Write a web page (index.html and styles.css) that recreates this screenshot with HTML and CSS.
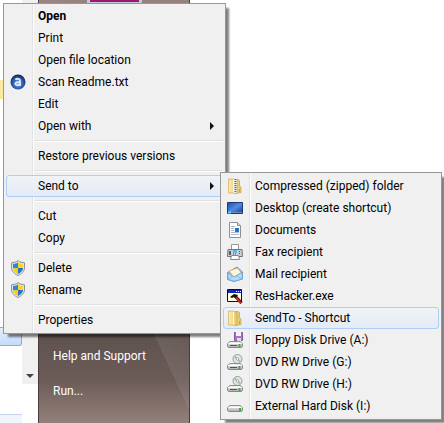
FILE: index.html
```html
<!DOCTYPE html>
<html lang="en">
<head>
<meta charset="utf-8">
<title>Send to menu</title>
<link rel="stylesheet" href="styles.css">
</head>
<body>
<svg class="defs" aria-hidden="true">
  <defs>
    <linearGradient id="gold" x1="0" x2="1"><stop offset="0" stop-color="#fbf0b4"/><stop offset="1" stop-color="#e3c368"/></linearGradient>
    <linearGradient id="metal" x1="0" x2="0" y1="0" y2="1"><stop offset="0" stop-color="#f8f8f8"/><stop offset="1" stop-color="#aaa"/></linearGradient>
    <linearGradient id="screen" x1="0" x2="1" y1="0" y2="1"><stop offset="0" stop-color="#1c4ba8"/><stop offset=".5" stop-color="#4d8ce8"/><stop offset="1" stop-color="#123c98"/></linearGradient>
    <radialGradient id="ball" cx=".5" cy=".6" r=".6"><stop offset="0" stop-color="#6fa0ea"/><stop offset=".6" stop-color="#2c5cb0"/><stop offset="1" stop-color="#0c1c4c"/></radialGradient>
    <symbol id="shield" viewBox="0 0 16 16">
      <path d="M8 .5 10 2l4.500.8v5c0 3.500-3 6.200-6.500 7.700C4.500 14 1.500 11.300 1.500 7.800v-5L6 2z" fill="#e4e4df" stroke="#8d9297"/>
      <path d="M8 2.300V8H3V3.900l3.300-.5z" fill="#2b86dc"/><path d="M8 2.300 9.700 3.400l3.300.5V8H8z" fill="#f8d52c"/>
      <path d="M3 8h5v6C5.500 12.800 3 10.800 3 8z" fill="#f3cb22"/><path d="M8 8h5c0 2.800-2.500 4.800-5 6z" fill="#2573cf"/>
    </symbol>
    <symbol id="folder" viewBox="0 0 16 16">
      <path d="M8 1.500h3.500l1 1V8l1.500 1v5.500L8 15.500z" fill="#e8cb72" stroke="#c9a343" stroke-width=".7"/>
      <path d="M1.500 1h5L10 2.500V15.500L6.500 15h-5z" fill="url(#gold)" stroke="#cfac50" stroke-width=".7"/>
      <path d="M6.500 1.500v13" stroke="#fffbe0"/>
      <path d="M12.500 11v3" stroke="#6db5e0"/>
    </symbol>
    <symbol id="drive" viewBox="0 0 16 16">
      <path d="M3 9.500h10l2.500 2v3l-1 1h-13l-1-1v-3z" fill="url(#metal)" stroke="#777" stroke-width=".8"/>
      <path d="M1 11.500h14" stroke="#fff"/><path d="M3 13.500h7" stroke="#555"/><path d="M11.500 12h2v3h-2z" fill="#38b530"/>
    </symbol>
    <symbol id="disc-drive" viewBox="0 0 16 16">
      <circle cx="10.500" cy="5" r="4.500" fill="#e3e8e6" stroke="#888" stroke-width=".8"/><path d="M10.500 5 7 3.500 8.500 1.500zM10.500 5l3.500 2-2 1.500z" fill="#8fc7a0"/><circle cx="10.500" cy="5" r="1.300" fill="#fff" stroke="#888" stroke-width=".7"/>
      <use href="#drive"/>
    </symbol>
  </defs>
</svg>

<div class="desktop">
  <div class="pane">
    <div class="pane-mark"></div>
    <div class="pane-selected"></div>
    <div class="pane-footer"></div>
  </div>
  <div class="scrollbar"><button class="scroll-down" aria-label="Scroll down"></button></div>
  <nav class="start">
    <div class="avatar"></div>
    <a href="#">Help and Support</a>
    <a href="#">Run...</a>
  </nav>
</div>

<div class="menu context" role="menu">
  <button class="item default" role="menuitem"><span class="icon"></span>Open</button>
  <button class="item" role="menuitem"><span class="icon"></span>Print</button>
  <button class="item" role="menuitem"><span class="icon"></span>Open file location</button>
  <button class="item" role="menuitem"><svg class="icon" viewBox="0 0 16 16"><circle cx="8" cy="8" r="7.500" fill="url(#ball)"/><path d="M5.500 5.800C6.500 4.300 10 4.300 10 6.800V12M10 8C7 8 5.300 8.300 5.300 9.800s3 2.200 4.700.2" fill="none" stroke="#dbe8ff" stroke-width="1.800"/></svg>Scan Readme.txt</button>
  <button class="item" role="menuitem"><span class="icon"></span>Edit</button>
  <button class="item parent" role="menuitem"><span class="icon"></span>Open with</button>
  <hr>
  <button class="item" role="menuitem"><span class="icon"></span>Restore previous versions</button>
  <hr>
  <button class="item parent active" role="menuitem"><span class="icon"></span>Send to</button>
  <hr>
  <button class="item" role="menuitem"><span class="icon"></span>Cut</button>
  <button class="item" role="menuitem"><span class="icon"></span>Copy</button>
  <hr>
  <button class="item" role="menuitem"><svg class="icon"><use href="#shield"/></svg>Delete</button>
  <button class="item" role="menuitem"><svg class="icon"><use href="#shield"/></svg>Rename</button>
  <hr>
  <button class="item" role="menuitem"><span class="icon"></span>Properties</button>
</div>

<div class="menu submenu" role="menu">
  <button class="item" role="menuitem"><svg class="icon" viewBox="0 0 16 16"><use href="#folder"/><path d="M8.500 1v14" stroke="#e8e8e8" stroke-width="3"/><path d="M8.500 1v14" stroke="#5c6478" stroke-width="2" stroke-dasharray="1 1"/></svg>Compressed (zipped) folder</button>
  <button class="item" role="menuitem"><svg class="icon" viewBox="0 0 16 16"><path d="M.5 2.500h15v11H.5z" fill="url(#screen)" stroke="#22386b"/><path d="M1 12.500h14" stroke="#6f88b4"/><path d="M1 12.500h3" stroke="#67d2e8" stroke-width="2"/></svg>Desktop (create shortcut)</button>
  <button class="item" role="menuitem"><svg class="icon" viewBox="0 0 16 16"><path d="M2.500.5h8l3 3v12h-11z" fill="#fff" stroke="#8b9094"/><path d="M10.500.5v3h3" fill="#ddd" stroke="#8b9094"/><path d="M4 4.500h4M4 6.500h3M4 8.500h3M4 10.500h8M4 12.500h8" stroke="#a9bad0"/><path d="M8 6h4v4H8z" fill="#2870c8"/></svg>Documents</button>
  <button class="item" role="menuitem"><svg class="icon" viewBox="0 0 16 16"><path d="M4.500.5h7v6h-7z" fill="#fff" stroke="#999"/><path d="M1 5.500h14l.5 7H.5z" fill="#c9ced3" stroke="#6e7479"/><path d="M2 7h2v4H2z" fill="#555e66"/><path d="M6 6h4v3H6z" fill="#58b7ed"/><path d="M6 10h4M12 7.500h2M12 9.500h2" stroke="#555" stroke-dasharray="1 1"/><path d="M4.500 11.500h7l1 4h-9z" fill="#fff" stroke="#888"/></svg>Fax recipient</button>
  <button class="item" role="menuitem"><svg class="icon" viewBox="0 0 16 16"><path d="M.5 6.500 10 1l5.500 5v7L7 15.500l-6.500-2z" fill="#86bce8" stroke="#5287b9" stroke-width=".8"/><path d="m2 5 8.500-3L14 6.500 7 11z" fill="#fff5dc" stroke="#dfa85b" stroke-width=".7"/><path d="M.8 7 7 11l8.300-4.500V13L7 15.200l-6.200-2z" fill="#b4dbf8" stroke="#5f9dd0" stroke-width=".6"/><path d="m1 13 5-3M15 12.500 9 10" stroke="#77b3e2" stroke-width=".7"/></svg>Mail recipient</button>
  <button class="item" role="menuitem"><svg class="icon" viewBox="0 0 16 16"><path d="M.5 1.500h14v12H.5z" fill="#fffde0" stroke="#111"/><path d="M1 2h13v3H1z" fill="#1725a8"/><path d="M9 3.500h5" stroke="#fff" stroke-dasharray="1 1"/><path d="m3 9 4-3 4 1-2 3-2-1-2 1z" fill="#111"/><path d="m8 8 6.500 7" stroke="#111" stroke-width="3"/><path d="m9 9.500 5 5.500" stroke="#e02020" stroke-width="2"/></svg>ResHacker.exe</button>
  <button class="item active" role="menuitem"><svg class="icon"><use href="#folder"/></svg>SendTo - Shortcut</button>
  <button class="item" role="menuitem"><svg class="icon" viewBox="0 0 16 16"><path d="M7.500.5h8v8h-8z" fill="#a678bd" stroke="#84589c"/><path d="M9 0h5v4H9z" fill="#f6effa"/><path d="M10 6h4v3h-4z" fill="#ddd"/><use href="#drive"/></svg>Floppy Disk Drive (A:)</button>
  <button class="item" role="menuitem"><svg class="icon"><use href="#disc-drive"/></svg>DVD RW Drive (G:)</button>
  <button class="item" role="menuitem"><svg class="icon"><use href="#disc-drive"/></svg>DVD RW Drive (H:)</button>
  <button class="item" role="menuitem"><svg class="icon" viewBox="0 0 16 16"><path d="M3 7.500h10l2.500 2v3l-1 1h-13l-1-1v-3z" fill="url(#metal)" stroke="#777" stroke-width=".8"/><path d="M1 9.500h14" stroke="#fff"/><path d="M12 10h2v3h-2z" fill="#38b530"/></svg>External Hard Disk (I:)</button>
</div>
</body>
</html>
```

FILE: styles.css
```css
* { box-sizing: border-box; }

body {
  margin: 0;
  min-height: 100vh;
  background: #fff;
  font: 12px/20px Roboto, "Noto Sans", sans-serif;
  color: #000;
  overflow: hidden;
}

.defs { position: absolute; width: 0; height: 0; }

.desktop { display: flex; height: 100vh; }

.pane { flex: 0 0 22px; display: flex; flex-direction: column; }
.pane-mark { margin-top: 80px; height: 19px; background: #ffe8a0; }
.pane-selected {
  margin-top: 228px;
  height: 19px;
  border: 1px solid #84acdd;
  border-left: 0;
  border-radius: 0 3px 3px 0;
  background: linear-gradient(#e2eefc, #c4dcf8);
}
.pane-footer { margin-top: auto; height: 9px; border-top: 1px solid #c5d5ea; background: #f0f5fc; }

.scrollbar { flex: 0 0 16px; display: flex; align-items: flex-end; height: 384px; background: #f0f0f0; }
.scroll-down { width: 16px; height: 16px; padding: 0; border: 0; background: none; }
.scroll-down::before {
  content: "";
  display: block;
  width: 0;
  margin: 0 auto;
  border: 4px solid transparent;
  border-top-color: #444;
  border-bottom: 0;
}

.start {
  flex: 0 0 152px;
  display: flex;
  flex-direction: column;
  justify-content: flex-end;
  gap: 15px;
  padding: 0 14px 22px;
  border: solid #4a3c3a;
  border-width: 0 1px;
  background:
    linear-gradient(65deg, transparent 45%, rgba(255, 255, 255, .08) 45%, transparent 70%),
    linear-gradient(#95827d 0, #95827d 20px, #5e504d 330px, #6b5c58 380px, #94807a 100%);
}
.start a { color: #fff; text-decoration: none; }
.avatar {
  width: 55px;
  height: 3px;
  margin: 0 0 auto 34px;
  border: solid #bcd;
  border-width: 0 3px 1px;
  background: #a01868;
}

.menu {
  position: absolute;
  border: 1px solid #979797;
  padding: 2px;
  background: linear-gradient(90deg, transparent 28px, #e2e3e3 28px, #e2e3e3 29px, #fff 29px, #fff 30px, transparent 30px) #f0f0f0;
  box-shadow: 4px 4px 2px -1px rgba(0, 0, 0, .5);
}
.context { left: 3px; top: 3px; width: 223px; padding-top: 1px; }
.submenu { left: 220px; top: 172px; width: 222px; }

.item {
  display: flex;
  align-items: center;
  gap: 12px;
  width: 100%;
  height: 22px;
  padding: 0 8px 0 3px;
  border: 1px solid transparent;
  border-radius: 3px;
  background: none;
  font: inherit;
  color: inherit;
  text-align: left;
  white-space: nowrap;
}
.default { font-weight: bold; }
.active { border-color: #aecff7; background: linear-gradient(rgba(240, 244, 250, .8), rgba(226, 234, 246, .8)); }
.parent::after {
  content: "";
  margin-left: auto;
  border: 4px solid transparent;
  border-left-color: #111;
  border-right: 0;
}
.icon { flex: none; width: 16px; height: 16px; }

hr {
  height: 2px;
  margin: 3px 0 3px 28px;
  border: 0;
  border-top: 1px solid #e0e0e0;
  background: #fff;
}
```
